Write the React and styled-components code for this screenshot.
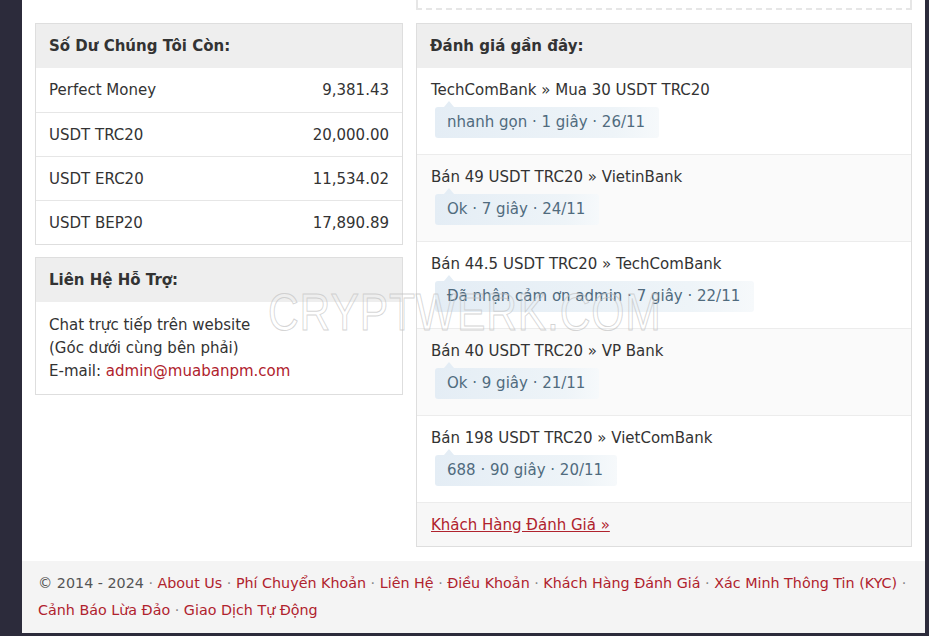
import React from "react";
import styled, { createGlobalStyle } from "styled-components";

const GlobalStyle = createGlobalStyle`
  html, body {
    margin: 0;
    padding: 0;
    background: #2c2b3b;
  }
  body {
    font-family: "DejaVu Sans", Verdana, sans-serif;
    font-size: 15px;
    color: #333;
  }
`;

const Page = styled.div`
  position: relative;
  width: 903px;
  margin-left: 22px;
  background: #fff;
  overflow: hidden;
`;

const Columns = styled.div`
  display: grid;
  grid-template-columns: 368px 496px;
  column-gap: 13px;
  padding: 0 13px;
  align-items: start;
`;

const LeftCol = styled.div`
  display: flex;
  flex-direction: column;
  gap: 12px;
  margin-top: 23px;
`;

const RightCol = styled.div`
  display: flex;
  flex-direction: column;
`;

const DashedTail = styled.div`
  height: 8px;
  border: 2px dashed #e6e6e6;
  border-top: none;
  margin-bottom: 13px;
`;

const Panel = styled.section`
  border: 1px solid #dedede;
  background: #fff;
`;

const PanelHead = styled.h3`
  margin: 0;
  height: 44px;
  display: flex;
  align-items: center;
  padding: 0 13px;
  background: #eeeeee;
  font-size: 15px;
  font-weight: bold;
  color: #333;
`;

const BalanceRow = styled.div`
  height: 44px;
  display: flex;
  align-items: center;
  justify-content: space-between;
  padding: 0 13px;
  & + & {
    height: 43px;
    border-top: 1px solid #e6e6e6;
  }
`;

const ContactBody = styled.div`
  padding: 12px 13px 11px;
  line-height: 23px;
`;

const Link = styled.a`
  color: #b0222d;
  text-decoration: ${(p) => (p.underline ? "underline" : "none")};
`;

const Review = styled.div`
  height: 87px;
  box-sizing: border-box;
  padding: 11px 14px 0;
  border-bottom: 1px solid #ececec;
  background: ${(p) => (p.shade ? "#fafafa" : "#fff")};
`;

const ReviewTitle = styled.div`
  line-height: 22px;
`;

const Bubble = styled.div`
  position: relative;
  display: inline-block;
  margin: 6px 0 0 4px;
  height: 31px;
  line-height: 31px;
  padding: 0 14px 0 12px;
  border-radius: 3px;
  color: #506b7e;
  background: linear-gradient(to right, #e4edf5, #eef4f8 80%, #f6f9fb);
  &::before {
    content: "";
    position: absolute;
    left: 9px;
    top: -6px;
    border-left: 5px solid transparent;
    border-right: 5px solid transparent;
    border-bottom: 6px solid #e4edf5;
  }
`;

const MoreRow = styled.div`
  height: 43px;
  display: flex;
  align-items: center;
  padding: 0 14px;
  background: #f7f7f7;
`;

const Footer = styled.footer`
  margin-top: 14px;
  height: 72px;
  box-sizing: border-box;
  padding: 9px 16px 0;
  background: #f4f4f4;
  font-size: 14.3px;
  line-height: 27px;
  color: #555;
`;

const FooterLine = styled.div`
  white-space: nowrap;
`;

const Sep = styled.span`
  color: #888;
`;

const Watermark = styled.div`
  position: absolute;
  left: 246px;
  top: 286px;
  font-family: "Liberation Sans", Arial, sans-serif;
  font-size: 52px;
  line-height: 1;
  letter-spacing: 1px;
  color: transparent;
  -webkit-text-stroke: 1px rgba(195, 195, 195, 0.7);
  transform: scaleX(0.82);
  transform-origin: left top;
  pointer-events: none;
  white-space: nowrap;
`;

const balances = [
  ["Perfect Money", "9,381.43"],
  ["USDT TRC20", "20,000.00"],
  ["USDT ERC20", "11,534.02"],
  ["USDT BEP20", "17,890.89"],
];

const reviews = [
  ["TechComBank » Mua 30 USDT TRC20", "nhanh gọn · 1 giây · 26/11"],
  ["Bán 49 USDT TRC20 » VietinBank", "Ok · 7 giây · 24/11"],
  ["Bán 44.5 USDT TRC20 » TechComBank", "Đã nhận cảm ơn admin · 7 giây · 22/11"],
  ["Bán 40 USDT TRC20 » VP Bank", "Ok · 9 giây · 21/11"],
  ["Bán 198 USDT TRC20 » VietComBank", "688 · 90 giây · 20/11"],
];

const footerTop = [
  "About Us",
  "Phí Chuyển Khoản",
  "Liên Hệ",
  "Điều Khoản",
  "Khách Hàng Đánh Giá",
  "Xác Minh Thông Tin (KYC)",
];
const footerBottom = ["Cảnh Báo Lừa Đảo", "Giao Dịch Tự Động"];

export default function App() {
  return (
    <>
      <GlobalStyle />
      <Page>
        <Columns>
          <LeftCol>
            <Panel>
              <PanelHead>Số Dư Chúng Tôi Còn:</PanelHead>
              {balances.map(([name, amount]) => (
                <BalanceRow key={name}>
                  <span>{name}</span>
                  <span>{amount}</span>
                </BalanceRow>
              ))}
            </Panel>
            <Panel>
              <PanelHead>Liên Hệ Hỗ Trợ:</PanelHead>
              <ContactBody>
                Chat trực tiếp trên website
                <br />
                (Góc dưới cùng bên phải)
                <br />
                E-mail: <Link href="#">admin@muabanpm.com</Link>
              </ContactBody>
            </Panel>
          </LeftCol>
          <RightCol>
            <DashedTail />
            <Panel>
              <PanelHead>Đánh giá gần đây:</PanelHead>
              {reviews.map(([title, note], i) => (
                <Review key={title} shade={i % 2 === 1}>
                  <ReviewTitle>{title}</ReviewTitle>
                  <Bubble>{note}</Bubble>
                </Review>
              ))}
              <MoreRow>
                <Link href="#" underline>
                  Khách Hàng Đánh Giá »
                </Link>
              </MoreRow>
            </Panel>
          </RightCol>
        </Columns>
        <Footer>
          <FooterLine>
            © 2014 - 2024
            {footerTop.map((label) => (
              <React.Fragment key={label}>
                <Sep> · </Sep>
                <Link href="#">{label}</Link>
              </React.Fragment>
            ))}
            <Sep> ·</Sep>
          </FooterLine>
          <FooterLine>
            {footerBottom.map((label, i) => (
              <React.Fragment key={label}>
                {i > 0 && <Sep> · </Sep>}
                <Link href="#">{label}</Link>
              </React.Fragment>
            ))}
          </FooterLine>
        </Footer>
        <Watermark>CRYPTWERK.COM</Watermark>
      </Page>
    </>
  );
}
